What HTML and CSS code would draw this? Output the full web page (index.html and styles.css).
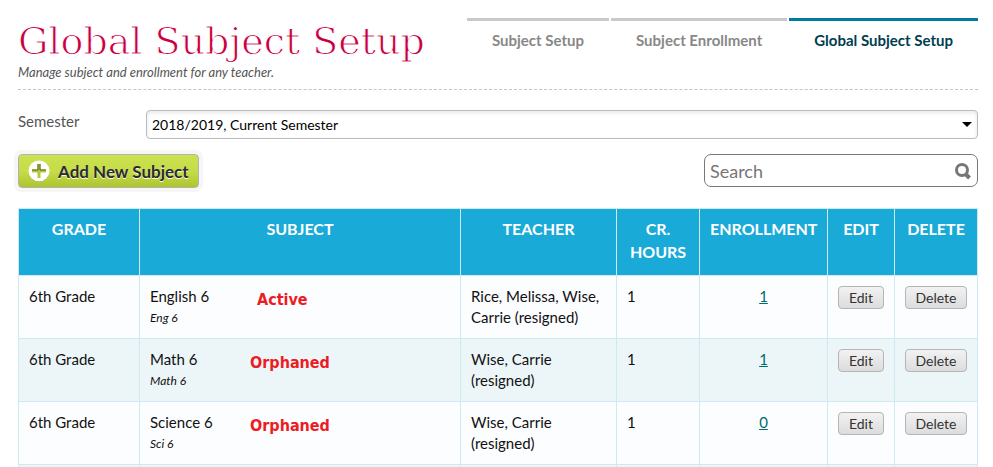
FILE: index.html
```html
<!DOCTYPE html>
<html lang="en">

<head>
    <meta charset="UTF-8">
    <meta name="viewport" content="width=device-width, initial-scale=1.0">
    <title>Global Subject Setup</title>
    <link rel="stylesheet" href="styles.css">
</head>

<body>
    <header class="page-header">
        <div class="page-title">
            <h1>Global Subject Setup</h1>
            <p>Manage subject and enrollment for any teacher.</p>
        </div>
        <nav class="tabs">
            <a href="#">Subject Setup</a>
            <a href="#">Subject Enrollment</a>
            <a href="#" class="active">Global Subject Setup</a>
        </nav>
    </header>

    <div class="semester">
        <label for="semester">Semester</label>
        <div class="select-wrap">
            <select id="semester">
                <option>2018/2019, Current Semester</option>
            </select>
        </div>
    </div>

    <div class="toolbar">
        <button type="button" class="add-button">
            <svg width="22" height="22" viewBox="0 0 22 22" aria-hidden="true">
                <circle cx="11" cy="12" r="10" fill="#7d8c3a" />
                <circle cx="11" cy="11" r="10.500" fill="#fff" />
                <path d="M11 4V18M4 11H18" stroke="#b4ca38" stroke-width="3" />
                <path d="M4 10H10V4M12 4V10H18" stroke="#55602a" stroke-width="1" fill="none" />
            </svg>
            <span>Add New Subject</span>
        </button>
        <div class="search">
            <input type="text" placeholder="Search" aria-label="Search">
            <svg width="18" height="18" viewBox="0 0 18 18" aria-hidden="true">
                <circle cx="8" cy="8" r="5.500" fill="none" stroke="#777" stroke-width="3" />
                <path d="M11.500 12L15.500 16" stroke="#777" stroke-width="4" />
            </svg>
        </div>
    </div>

    <table class="subjects">
        <colgroup>
            <col class="col-grade">
            <col>
            <col class="col-teacher">
            <col class="col-hours">
            <col class="col-enrollment">
            <col class="col-edit">
            <col class="col-delete">
        </colgroup>
        <thead>
            <tr>
                <th>GRADE</th>
                <th>SUBJECT</th>
                <th>TEACHER</th>
                <th>CR. HOURS</th>
                <th>ENROLLMENT</th>
                <th>EDIT</th>
                <th>DELETE</th>
            </tr>
        </thead>
        <tbody>
            <tr>
                <td>6th Grade</td>
                <td>
                    <div class="subject">
                        <div class="subject-name">English 6<em>Eng 6</em></div>
                        <strong class="status status-active">Active</strong>
                    </div>
                </td>
                <td>Rice, Melissa, Wise, Carrie (resigned)</td>
                <td>1</td>
                <td class="center"><a href="#">1</a></td>
                <td><button type="button">Edit</button></td>
                <td><button type="button">Delete</button></td>
            </tr>
            <tr>
                <td>6th Grade</td>
                <td>
                    <div class="subject">
                        <div class="subject-name">Math 6<em>Math 6</em></div>
                        <strong class="status">Orphaned</strong>
                    </div>
                </td>
                <td>Wise, Carrie (resigned)</td>
                <td>1</td>
                <td class="center"><a href="#">1</a></td>
                <td><button type="button">Edit</button></td>
                <td><button type="button">Delete</button></td>
            </tr>
            <tr>
                <td>6th Grade</td>
                <td>
                    <div class="subject">
                        <div class="subject-name">Science 6<em>Sci 6</em></div>
                        <strong class="status">Orphaned</strong>
                    </div>
                </td>
                <td>Wise, Carrie (resigned)</td>
                <td>1</td>
                <td class="center"><a href="#">0</a></td>
                <td><button type="button">Edit</button></td>
                <td><button type="button">Delete</button></td>
            </tr>
            <tr class="next-row">
                <td></td>
                <td></td>
                <td></td>
                <td></td>
                <td></td>
                <td></td>
                <td></td>
            </tr>
        </tbody>
    </table>
</body>

</html>
```

FILE: styles.css
```css
body {
    margin: 0;
    padding: 18px 15px 0 18px;
    background-color: #fff;
    color: #111;
    font-family: Lato, "Liberation Sans", sans-serif;
    font-size: 15px;
    line-height: 21px;
}

/* header */
.page-header {
    display: flex;
    justify-content: space-between;
    align-items: flex-start;
    height: 71px;
    border-bottom: 1px dashed #c4c4c4;
}

h1 {
    margin: 0;
    color: #c8003f;
    font-family: "DejaVu Serif", serif;
    font-size: 38px;
    font-weight: normal;
    line-height: 46px;
    white-space: nowrap;
    -webkit-text-stroke: 1px #fff;
}

.page-title p {
    margin: 0;
    color: #555;
    font-size: 13px;
    font-style: italic;
    line-height: 16px;
}

.tabs {
    display: flex;
    gap: 2px;
}

.tabs a {
    padding: 9px 25px;
    border-top: 3px solid #c9c9c9;
    color: #888;
    font-size: 15px;
    font-weight: bold;
    text-decoration: none;
    white-space: nowrap;
}

.tabs a.active {
    border-top-color: #007a9e;
    color: #003d50;
}

/* semester */
.semester {
    display: flex;
    margin-top: 20px;
}

.semester label {
    width: 128px;
    padding-top: 1px;
    color: #555;
}

.select-wrap {
    position: relative;
    flex: 1;
}

.select-wrap::after {
    content: "";
    position: absolute;
    top: 12px;
    right: 6px;
    border: 5px solid transparent;
    border-top-color: #000;
    border-bottom: 0;
    pointer-events: none;
}

.semester select {
    display: block;
    width: 100%;
    height: 29px;
    padding: 0 5px;
    border: 1px solid #bbb;
    border-radius: 4px;
    background-color: #fff;
    box-shadow: inset 0 2px 4px #e8e8e8;
    color: #000;
    font-family: inherit;
    font-size: 14px;
    appearance: none;
}

/* toolbar */
.toolbar {
    display: flex;
    justify-content: space-between;
    align-items: flex-start;
    margin: 15px 0 20px;
}

.add-button {
    display: flex;
    align-items: center;
    gap: 8px;
    height: 34px;
    padding: 0 9px;
    border: 1px solid #b3b3b3;
    border-radius: 4px;
    background: linear-gradient(#cbe14f, #c6dc49 50%, #afc52e);
    box-shadow: 0 0 0 4px #f6f6f6;
    color: #2b2b2b;
    font-family: inherit;
    font-size: 17px;
    font-weight: bold;
    text-shadow: 0 1px 0 #fff;
    white-space: nowrap;
}

.search {
    display: flex;
    align-items: center;
    box-sizing: border-box;
    width: 274px;
    height: 33px;
    padding: 0 5px;
    border: 1px solid #777;
    border-radius: 7px;
}

.search input {
    flex: 1;
    min-width: 0;
    padding: 0;
    border: 0;
    outline: 0;
    background: none;
    font-family: inherit;
    font-size: 18px;
}

.search input::placeholder {
    color: #777;
}

/* table */
.subjects {
    width: 100%;
    border-collapse: collapse;
    table-layout: fixed;
}

.col-grade {
    width: 121px;
}

.col-teacher {
    width: 156px;
}

.col-hours {
    width: 83px;
}

.col-enrollment {
    width: 128px;
}

.col-edit {
    width: 67px;
}

.col-delete {
    width: 83px;
}

th,
td {
    padding: 10px;
    border: 1px solid #cdeaf3;
    text-align: left;
    vertical-align: top;
}

th {
    padding: 8px 10px 12px;
    background-color: #1aaad8;
    color: #fff;
    font-size: 16px;
    line-height: 23px;
    text-align: center;
}

td {
    background-color: #fcfdff;
}

tr:nth-child(even) td {
    background-color: #ecf6f9;
}

.next-row td {
    height: 2px;
    padding: 0;
    border-bottom: 0;
}

.center {
    text-align: center;
}

td a {
    color: #006b6b;
}

td button {
    display: block;
    width: 100%;
    height: 23px;
    padding: 0;
    border: 1px solid #b5b5b5;
    border-radius: 4px;
    background: linear-gradient(#f2f2f2, #dcdcdc);
    color: #333;
    font-family: inherit;
    font-size: 14px;
}

.subject {
    display: flex;
}

.subject-name {
    width: 100px;
}

.subject-name em {
    display: block;
    font-size: 12px;
}

.status {
    padding-top: 3px;
    color: #ed1c24;
    font-family: "DejaVu Sans Condensed", "DejaVu Sans", sans-serif;
    font-size: 16px;
}

.status-active {
    padding-left: 7px;
}
```
